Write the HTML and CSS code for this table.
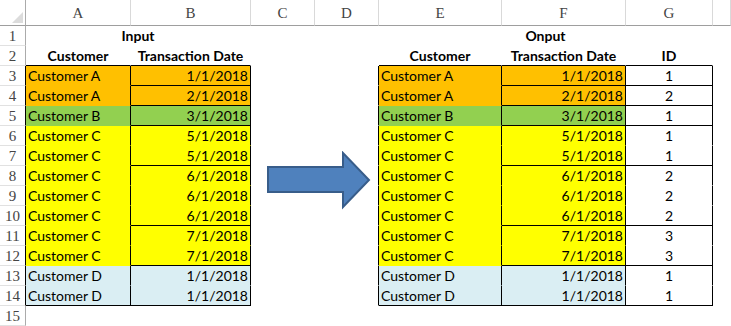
FILE: index.html
```html
<!DOCTYPE html>
<html>
<head>
<meta charset="utf-8">
<link rel="stylesheet" href="styles.css">
</head>
<body>
<div class="sheet">
  <div class="grid">
    <!-- column headers -->
    <div class="ch corner"><svg class="tri" width="11" height="11" viewBox="0 0 11 11"><polygon points="11,0 11,11 0,11" fill="#dcdcdc"/></svg></div>
    <div class="ch">A</div><div class="ch">B</div><div class="ch">C</div><div class="ch">D</div><div class="ch">E</div><div class="ch">F</div><div class="ch">G</div><div class="ch"></div>

    <!-- row 1 -->
    <div class="rh">1</div>
    <div class="c title s2">Input</div><div class="c"></div><div class="c"></div>
    <div class="c title s3">Onput</div><div class="c"></div>

    <!-- row 2 -->
    <div class="rh">2</div>
    <div class="c hd bb">Customer</div><div class="c hd bb">Transaction Date</div><div class="c"></div><div class="c"></div>
    <div class="c hd bb">Customer</div><div class="c hd bb">Transaction Date</div><div class="c hd bb">ID</div><div class="c"></div>

    <!-- row 3 -->
    <div class="rh lb">3</div>
    <div class="c or br">Customer A</div><div class="c or br bb num">1/1/2018</div><div class="c"></div><div class="c br"></div>
    <div class="c or br">Customer A</div><div class="c or br bb num">1/1/2018</div><div class="c br bb id">1</div><div class="c"></div>

    <!-- row 4 -->
    <div class="rh lb">4</div>
    <div class="c or br">Customer A</div><div class="c or br bb num">2/1/2018</div><div class="c"></div><div class="c br"></div>
    <div class="c or br">Customer A</div><div class="c or br bb num">2/1/2018</div><div class="c br bb id">2</div><div class="c"></div>

    <!-- row 5 -->
    <div class="rh lb">5</div>
    <div class="c gr br">Customer B</div><div class="c gr br bb num">3/1/2018</div><div class="c"></div><div class="c br"></div>
    <div class="c gr br">Customer B</div><div class="c gr br bb num">3/1/2018</div><div class="c br bb id">1</div><div class="c"></div>

    <!-- row 6 -->
    <div class="rh lb">6</div>
    <div class="c ye br">Customer C</div><div class="c ye br num">5/1/2018</div><div class="c"></div><div class="c br"></div>
    <div class="c ye br">Customer C</div><div class="c ye br num">5/1/2018</div><div class="c br id">1</div><div class="c"></div>

    <!-- row 7 -->
    <div class="rh lb">7</div>
    <div class="c ye br">Customer C</div><div class="c ye br bb num">5/1/2018</div><div class="c"></div><div class="c br"></div>
    <div class="c ye br">Customer C</div><div class="c ye br bb num">5/1/2018</div><div class="c br bb id">1</div><div class="c"></div>

    <!-- row 8 -->
    <div class="rh lb">8</div>
    <div class="c ye br">Customer C</div><div class="c ye br num">6/1/2018</div><div class="c"></div><div class="c br"></div>
    <div class="c ye br">Customer C</div><div class="c ye br num">6/1/2018</div><div class="c br id">2</div><div class="c"></div>

    <!-- row 9 -->
    <div class="rh lb">9</div>
    <div class="c ye br">Customer C</div><div class="c ye br num">6/1/2018</div><div class="c"></div><div class="c br"></div>
    <div class="c ye br">Customer C</div><div class="c ye br num">6/1/2018</div><div class="c br id">2</div><div class="c"></div>

    <!-- row 10 -->
    <div class="rh lb">10</div>
    <div class="c ye br">Customer C</div><div class="c ye br bb num">6/1/2018</div><div class="c"></div><div class="c br"></div>
    <div class="c ye br">Customer C</div><div class="c ye br bb num">6/1/2018</div><div class="c br bb id">2</div><div class="c"></div>

    <!-- row 11 -->
    <div class="rh lb">11</div>
    <div class="c ye br">Customer C</div><div class="c ye br num">7/1/2018</div><div class="c"></div><div class="c br"></div>
    <div class="c ye br">Customer C</div><div class="c ye br num">7/1/2018</div><div class="c br id">3</div><div class="c"></div>

    <!-- row 12 -->
    <div class="rh lb">12</div>
    <div class="c ye br">Customer C</div><div class="c ye br bb num">7/1/2018</div><div class="c"></div><div class="c br"></div>
    <div class="c ye br">Customer C</div><div class="c ye br bb num">7/1/2018</div><div class="c br bb id">3</div><div class="c"></div>

    <!-- row 13 -->
    <div class="rh lb">13</div>
    <div class="c bl br">Customer D</div><div class="c bl br num">1/1/2018</div><div class="c"></div><div class="c br"></div>
    <div class="c bl br">Customer D</div><div class="c bl br num">1/1/2018</div><div class="c br id">1</div><div class="c"></div>

    <!-- row 14 -->
    <div class="rh lb">14</div>
    <div class="c bl br bb">Customer D</div><div class="c bl br bb num">1/1/2018</div><div class="c"></div><div class="c br"></div>
    <div class="c bl br bb">Customer D</div><div class="c bl br bb num">1/1/2018</div><div class="c br bb id">1</div><div class="c"></div>

    <!-- row 15 -->
    <div class="rh">15</div>
    <div class="c"></div><div class="c"></div><div class="c"></div><div class="c"></div>
    <div class="c"></div><div class="c"></div><div class="c"></div><div class="c"></div>
  </div>

  <svg class="arrow" width="108" height="60" viewBox="0 0 108 60">
    <polygon points="2,16 77,16 77,2 103,29 77,56 77,41 2,41" fill="#4f81bd" stroke="#385d8a" stroke-width="2" stroke-linejoin="miter"/>
  </svg>
</div>
</body>
</html>
```

FILE: styles.css
```css
* { box-sizing: border-box; }

html, body {
  margin: 0;
  padding: 0;
  background: #ffffff;
}

.sheet {
  position: relative;
  width: 731px;
  height: 326px;
  overflow: hidden;
}

.grid {
  display: grid;
  grid-template-columns: 26px 105px 120px 64px 64px 123px 124px 87px 1fr;
  grid-template-rows: 26px repeat(15, 20px);
  font-family: "Lato", "Liberation Sans", sans-serif;
  font-size: 14px;
  color: #000;
}

.ch {
  background: #ffffff;
  border-right: 1px solid #d9d9d9;
  border-bottom: 1px solid #9e9e9e;
  font-family: "Liberation Serif", serif;
  font-size: 15px;
  color: #444;
  display: flex;
  align-items: center;
  justify-content: center;
  padding-top: 2px;
}

.corner {
  border-right: 1px solid #ababab;
  justify-content: flex-end;
  align-items: flex-end;
  padding: 0 2px 2px 0;
}

.tri { display: block; }

.rh {
  background: #ffffff;
  border-right: 1px solid #ababab;
  border-bottom: 1px solid #e1e1e1;
  font-family: "Liberation Serif", serif;
  font-size: 15px;
  color: #444;
  display: flex;
  align-items: center;
  justify-content: center;
  padding-top: 1px;
}

.rh.lb { border-right-color: #000; }

.c {
  border-right: 1px solid transparent;
  border-bottom: 1px solid transparent;
  padding: 0 2px 0 2px;
  line-height: 19px;
  white-space: nowrap;
  overflow: visible;
}

.br { border-right-color: #000; }
.bb { border-bottom-color: #000; }

.or { background: #ffc000; }
.gr { background: #92d050; }
.ye { background: #ffff00; }
.bl { background: #daeef3; }

.title, .hd {
  font-weight: bold;
  text-align: center;
}

.s2 { grid-column: span 2; }
.s3 { grid-column: span 3; }

.num { text-align: right; }
.id { text-align: center; }

.arrow {
  position: absolute;
  left: 266px;
  top: 151px;
}
```
